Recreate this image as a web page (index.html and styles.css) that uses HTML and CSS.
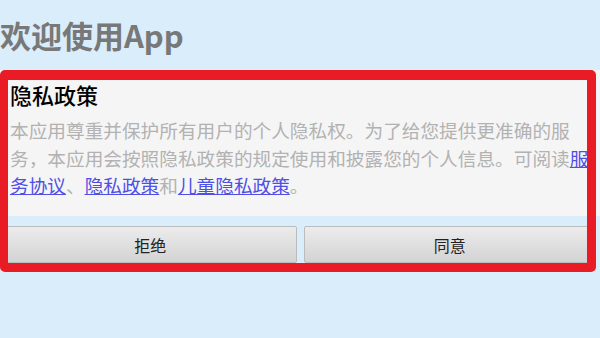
FILE: index.html
```html
<!DOCTYPE html>
<html lang="zh-CN">
<head>
    <meta charset="UTF-8">
    <meta name="viewport" content="width=device-width, initial-scale=1.0">
    <title>欢迎使用App</title>
    <link rel="stylesheet" href="styles.css">
</head>
<body>
    <div class="page">
        <h1 class="welcome">欢迎使用App</h1>
        <div class="dialog">
            <div class="dialog-body">
                <h2>隐私政策</h2>
                <p class="policy">本应用尊重并保护所有用户的个人隐私权。为了给您提供更准确的服务，本应用会按照隐私政策的规定使用和披露您的个人信息。可阅读<a href="#">服务协议</a>、<a href="#">隐私政策</a>和<a href="#">儿童隐私政策</a>。</p>
            </div>
            <div class="dialog-buttons">
                <button class="btn">拒绝</button>
                <button class="btn">同意</button>
            </div>
            <div class="highlight"></div>
        </div>
    </div>
</body>
</html>
```

FILE: styles.css
```css
body {
    margin: 0;
    background: #daedfb;
    font-family: "Noto Sans CJK SC", "Noto Sans", sans-serif;
}
.page {
    width: 600px;
    height: 338px;
    overflow: hidden;
    position: relative;
}
.welcome {
    margin: 0;
    padding-top: 14px;
    height: 57px;
    box-sizing: border-box;
    font-size: 31px;
    line-height: 42px;
    font-weight: bold;
    color: #787878;
}
.dialog {
    position: relative;
    padding-top: 13px;
}
.dialog-body {
    background: #f5f5f5;
    padding: 10px 0 0 10px;
    height: 146px;
    box-sizing: border-box;
}
.dialog-body h2 {
    margin: 0;
    font-size: 22px;
    line-height: 28px;
    font-weight: 500;
    color: #000;
}
.policy {
    margin: 8px 0 0;
    font-size: 18.67px;
    line-height: 27.5px;
    color: #b2b2b2;
}
.policy a {
    color: #4f4fe6;
    text-decoration: underline;
}
.dialog-buttons {
    display: flex;
    gap: 7px;
    padding: 10px 4px 0 4px;
}
.btn {
    flex: 1;
    height: 37px;
    border: 1px solid #bcbcbc;
    border-radius: 2px;
    background: linear-gradient(#ececec, #d3d3d3);
    font-family: "Noto Sans CJK SC", sans-serif;
    font-size: 16px;
    color: #222;
}
.highlight {
    position: absolute;
    left: 0;
    top: 13px;
    width: 596px;
    height: 202px;
    box-sizing: border-box;
    border-style: solid;
    border-color: #e91b24;
    border-width: 10px 9px 9px 8px;
    border-radius: 5px;
    pointer-events: none;
}
```
